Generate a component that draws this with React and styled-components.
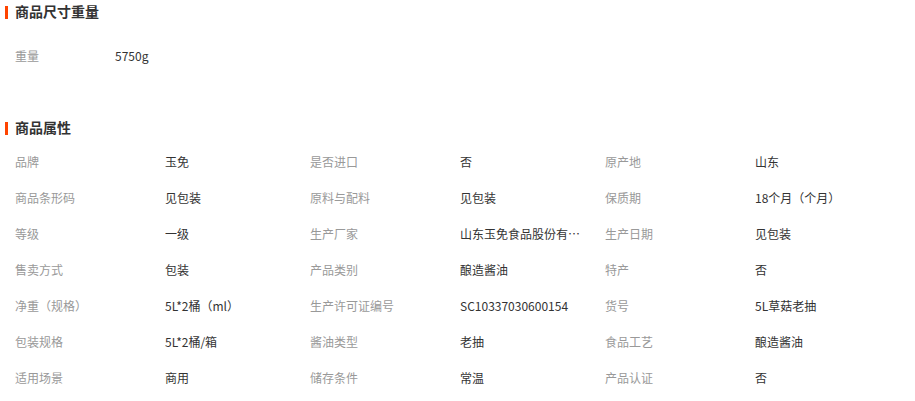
import React from 'react';
import styled, { createGlobalStyle } from 'styled-components';

const GlobalStyle = createGlobalStyle`
  body {
    margin: 0;
    background: #fff;
    font-family: "Microsoft YaHei", "Noto Sans CJK SC", "Liberation Sans", sans-serif;
    font-size: 12px;
    color: #333;
  }
`;

const Page = styled.div`
  width: 915px;
`;

const Section = styled.section`
  padding-bottom: ${(p) => p.$gap || 0}px;
`;

const Title = styled.h3`
  position: relative;
  margin: 0;
  height: 26px;
  line-height: 22px;
  padding-left: 15px;
  font-size: 14px;
  font-weight: bold;
  color: #333;

  &::before {
    content: '';
    position: absolute;
    left: 5px;
    top: 6px;
    width: 3px;
    height: 13px;
    background: #ff4400;
  }
`;

const Grid = styled.div`
  display: grid;
  grid-template-columns: ${(p) => p.$cols};
  padding-left: 15px;
  padding-top: ${(p) => p.$top || 0}px;
`;

const Label = styled.div`
  height: 36px;
  line-height: 36px;
  color: #999;
  white-space: nowrap;
`;

const Value = styled.div`
  height: 36px;
  line-height: 36px;
  color: #333;
  white-space: nowrap;
  overflow: hidden;
  text-overflow: ellipsis;
  max-width: 124px;
`;

const attrs = [
  ['品牌', '玉免', '是否进口', '否', '原产地', '山东'],
  ['商品条形码', '见包装', '原料与配料', '见包装', '保质期', '18个月（个月）'],
  ['等级', '一级', '生产厂家', '山东玉免食品股份有限公司', '生产日期', '见包装'],
  ['售卖方式', '包装', '产品类别', '酿造酱油', '特产', '否'],
  ['净重（规格）', '5L*2桶（ml）', '生产许可证编号', 'SC10337030600154', '货号', '5L草菇老抽'],
  ['包装规格', '5L*2桶/箱', '酱油类型', '老抽', '食品工艺', '酿造酱油'],
  ['适用场景', '商用', '储存条件', '常温', '产品认证', '否'],
];

export default function App() {
  return (
    <Page>
      <GlobalStyle />
      <Section $gap={42}>
        <Title>商品尺寸重量</Title>
        <Grid $cols="100px 1fr" $top={12}>
          <Label>重量</Label>
          <Value>5750g</Value>
        </Grid>
      </Section>
      <Section>
        <Title>商品属性</Title>
        <Grid $cols="150px 145px 150px 145px 150px 145px" $top={2}>
          {attrs.map((row) =>
            row.map((cell, i) =>
              i % 2 === 0 ? (
                <Label key={row[0] + i}>{cell}</Label>
              ) : (
                <Value key={row[0] + i} title={cell}>{cell}</Value>
              )
            )
          )}
        </Grid>
      </Section>
    </Page>
  );
}
